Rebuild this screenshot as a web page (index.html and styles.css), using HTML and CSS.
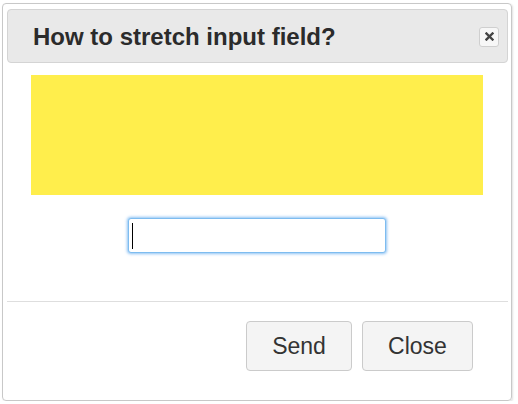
FILE: index.html
```html
<!DOCTYPE html>
<html>
<head>
<meta charset="utf-8">
<link rel="stylesheet" href="styles.css">
</head>
<body>
<div class="dialog">
  <div class="titlebar">
    <h1 class="title">How to stretch input field?</h1>
    <button class="x-btn" aria-label="close">
      <svg width="9" height="9" viewBox="0 0 9 9"><path d="M1.5 1.5L7.5 7.5M7.5 1.5L1.5 7.5" stroke="#444" stroke-width="2.4" stroke-linecap="square"/></svg>
    </button>
  </div>
  <div class="content">
    <div class="yellow"></div>
    <div class="field-wrap">
      <input class="field" type="text">
      <span class="caret"></span>
    </div>
  </div>
  <div class="footer">
    <button class="btn btn-send">Send</button>
    <button class="btn btn-close">Close</button>
  </div>
</div>
</body>
</html>
```

FILE: styles.css
```css
html, body {
  margin: 0;
  padding: 0;
  background: #fff;
}
body {
  font-family: "Liberation Sans", Arial, sans-serif;
  padding: 3px 0 0 2px;
}
.dialog {
  box-sizing: border-box;
  width: 510px;
  height: 398px;
  border: 1px solid #c8c8c8;
  border-radius: 4px;
  padding: 5px 3px 4px 4px;
  box-shadow: 1px 1px 2px rgba(0, 0, 0, 0.12);
  display: flex;
  flex-direction: column;
}
.titlebar {
  box-sizing: border-box;
  height: 54px;
  background: #e9e9e9;
  border: 1px solid #d4d4d4;
  border-radius: 4px;
  display: flex;
  align-items: center;
  justify-content: space-between;
  padding: 0 8px 0 25px;
}
.title {
  margin: 0;
  font-size: 24px;
  font-weight: bold;
  color: #2b2b2b;
  line-height: 27px;
}
.x-btn {
  box-sizing: border-box;
  width: 20px;
  height: 20px;
  padding: 0;
  margin-top: 1px;
  border: 1px solid #cfcfcf;
  border-radius: 3px;
  background: #f7f7f7;
  display: flex;
  align-items: center;
  justify-content: center;
}
.content {
  padding: 12px 25px 48px 24px;
  display: flex;
  flex-direction: column;
  align-items: center;
  border-bottom: 1px solid #dedede;
}
.yellow {
  align-self: stretch;
  height: 120px;
  background: #ffee4c;
}
.field-wrap {
  position: relative;
  margin-top: 23px;
  width: 258px;
  height: 35px;
}
.field {
  box-sizing: border-box;
  width: 258px;
  height: 35px;
  margin: 0;
  border: 1px solid #7dbcf0;
  border-radius: 3px;
  box-shadow: 0 0 3px 1px rgba(110, 178, 240, 0.8);
  outline: none;
  background: #fff;
}
.caret {
  position: absolute;
  left: 4px;
  top: 5px;
  width: 1px;
  height: 26px;
  background: #000;
}
.footer {
  display: flex;
  justify-content: flex-end;
  gap: 10px;
  padding: 19px 35px 0 0;
}
.btn {
  box-sizing: border-box;
  height: 50px;
  padding: 0;
  border: 1px solid #cbcbcb;
  border-radius: 4px;
  background: #f4f4f4;
  color: #333;
  font-family: "Liberation Sans", Arial, sans-serif;
  font-size: 23px;
}
.btn-send {
  width: 106px;
}
.btn-close {
  width: 111px;
}
```
